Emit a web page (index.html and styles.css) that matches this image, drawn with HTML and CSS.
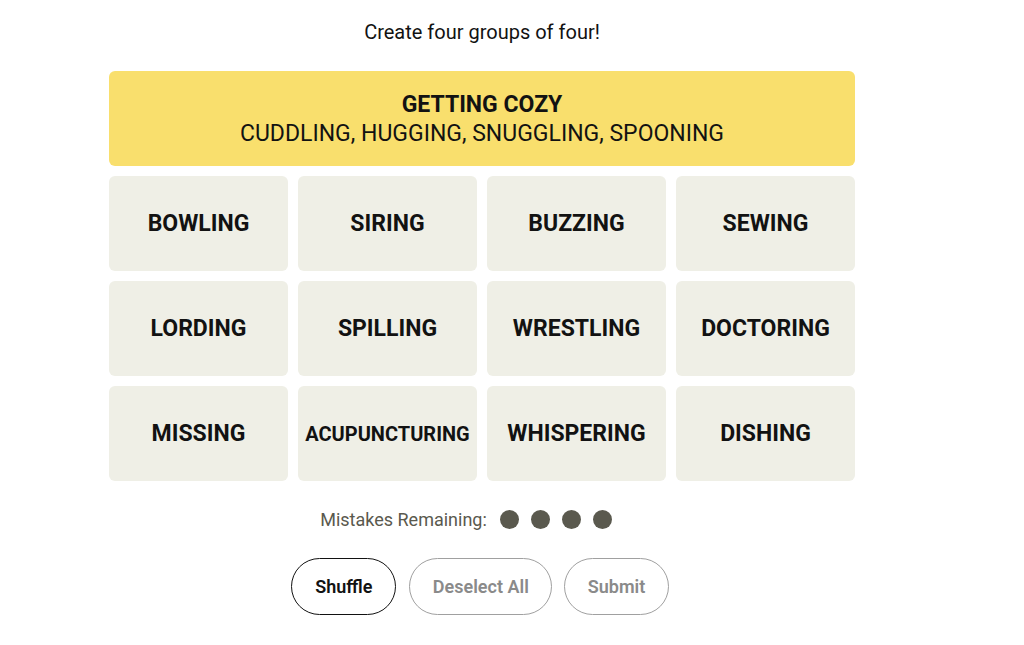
FILE: index.html
```html
<!DOCTYPE html>
<html lang="en">
<head>
    <meta charset="UTF-8">
    <meta name="viewport" content="width=device-width, initial-scale=1">
    <title>Connections</title>
    <link rel="stylesheet" href="styles.css">
</head>
<body>

<main class="game">
    <p class="prompt">Create four groups of four!</p>

    <div class="board">
        <div class="solved yellow">
            <h3>GETTING COZY</h3>
            <p>CUDDLING, HUGGING, SNUGGLING, SPOONING</p>
        </div>
        <div class="card">BOWLING</div>
        <div class="card">SIRING</div>
        <div class="card">BUZZING</div>
        <div class="card">SEWING</div>
        <div class="card">LORDING</div>
        <div class="card">SPILLING</div>
        <div class="card">WRESTLING</div>
        <div class="card">DOCTORING</div>
        <div class="card">MISSING</div>
        <div class="card small">ACUPUNCTURING</div>
        <div class="card">WHISPERING</div>
        <div class="card">DISHING</div>
    </div>

    <div class="mistakes">
        <span>Mistakes Remaining:</span>
        <span class="dot"></span>
        <span class="dot"></span>
        <span class="dot"></span>
        <span class="dot"></span>
    </div>

    <div class="controls">
        <button class="btn active">Shuffle</button>
        <button class="btn">Deselect All</button>
        <button class="btn">Submit</button>
    </div>
</main>

</body>
</html>
```

FILE: styles.css
```css
body {
    font-family: Roboto, "Liberation Sans", Arial, sans-serif;
    background-color: #fff;
    color: #121212;
    margin: 0;
}
.game {
    width: 964px;
    display: flex;
    flex-direction: column;
    align-items: center;
}
.prompt {
    font-size: 20px;
    margin: 20px 0 27px;
    line-height: 24px;
}
.board {
    display: grid;
    grid-template-columns: repeat(4, 179px);
    grid-auto-rows: 95px;
    gap: 10px;
}
.solved {
    grid-column: 1 / -1;
    border-radius: 6px;
    display: flex;
    flex-direction: column;
    align-items: center;
    justify-content: center;
}
.yellow {
    background-color: #f9df6d;
}
.solved h3 {
    font-size: 23px;
    font-weight: 700;
    margin: 0;
    line-height: 29px;
}
.solved p {
    font-size: 23px;
    margin: 0;
    line-height: 29px;
}
.card {
    background-color: #efefe6;
    border-radius: 6px;
    display: flex;
    align-items: center;
    justify-content: center;
    font-size: 23px;
    font-weight: 700;
}
.card.small {
    font-size: 20px;
}
.mistakes {
    display: flex;
    align-items: center;
    gap: 12px;
    margin-top: 28px;
    padding-right: 32px;
    font-size: 18px;
    color: #5a594e;
}
.mistakes span:first-child {
    margin-right: 1px;
}
.dot {
    width: 19px;
    height: 19px;
    border-radius: 50%;
    background-color: #5a594e;
}
.controls {
    display: flex;
    gap: 12px;
    margin-top: 28px;
    padding-right: 4px;
}
.btn {
    font-family: inherit;
    font-size: 18px;
    font-weight: 600;
    height: 57px;
    padding: 0 22.5px;
    border-radius: 30px;
    background: #fff;
    border: 1px solid #a0a0a0;
    color: #8a8a8a;
}
.btn.active {
    border-color: #121212;
    color: #121212;
    padding: 0 23px;
    margin-right: 1px;
}
```
